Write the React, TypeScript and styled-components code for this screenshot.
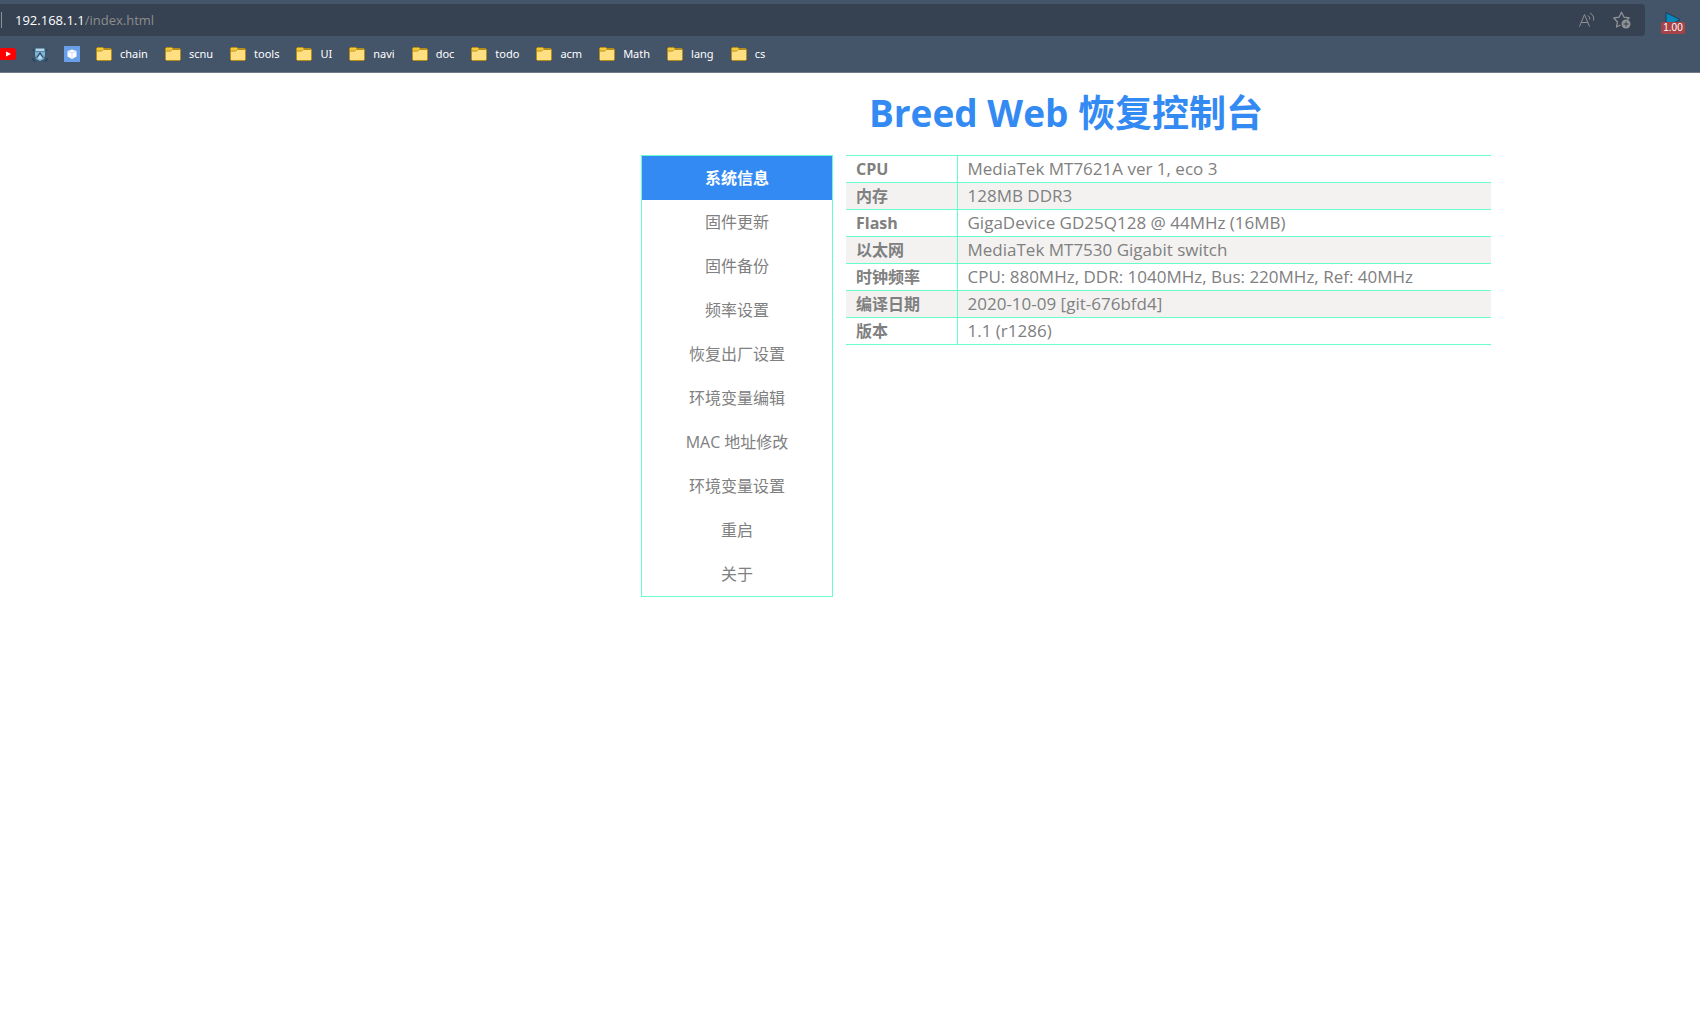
import React from "react";
import styled, { createGlobalStyle, css } from "styled-components";

const GlobalStyle = createGlobalStyle`
  *, *::before, *::after { box-sizing: border-box; }
  body {
    margin: 0;
    background: #fff;
    color: #808080;
    font-family: "Open Sans", "Noto Sans CJK SC", sans-serif;
    font-size: 16px;
  }
`;

const Browser = styled.header`
  background: #445469;
  border-bottom: 1px solid #6f7b8b;
  padding-top: 4px;
`;

const TopRow = styled.div`
  display: flex;
  gap: 16px;
  padding-right: 15px;
`;

const AddressBar = styled.form`
  flex: 1;
  display: flex;
  align-items: center;
  height: 32px;
  padding: 0 14px 0 1px;
  background: #364252;
  border-radius: 0 4px 4px 0;
  font-size: 13px;
`;

const Divider = styled.span`
  width: 1px;
  height: 16px;
  margin-right: 13px;
  background: #8a919b;
`;

const Host = styled.label`
  color: #fff;
`;

const PathInput = styled.input`
  flex: 1;
  min-width: 0;
  padding: 0;
  border: 0;
  outline: 0;
  background: none;
  color: #8d8d8d;
  font: inherit;
`;

const IconButton = styled.button`
  display: grid;
  place-items: center;
  height: 32px;
  padding: 0;
  border: 0;
  background: none;
  color: #8f9193;
  cursor: pointer;
`;

const BarActions = styled.div`
  display: flex;
  gap: 18px;
`;

const ExtensionButton = styled(IconButton)`
  position: relative;
  width: 24px;
`;

const Badge = styled.span`
  position: absolute;
  left: 0;
  bottom: 2px;
  width: 24px;
  height: 12px;
  border-radius: 2px;
  background: #a54349;
  color: #fff;
  font: 10px/12px "Liberation Sans", Arial, sans-serif;
  text-align: center;
`;

const Bookmarks = styled.nav`
  display: flex;
  align-items: center;
  gap: 16px;
  height: 36px;
  font-family: "Noto Sans", sans-serif;
`;

const Folders = styled.div`
  display: flex;
  gap: 17px;
`;

const Bookmark = styled.a`
  display: flex;
  align-items: center;
  gap: 8px;
  color: #fff;
  font-size: 11px;
  line-height: 16px;
  text-decoration: none;
`;

const Page = styled.div`
  padding-left: 432px;
`;

const Container = styled.div`
  max-width: 850px;
  margin: 0 auto;
`;

const Title = styled.h1`
  margin: 0;
  padding: 16px 0 18px;
  color: #338af3;
  font-size: 37px;
  line-height: 48px;
  text-align: center;
`;

const Columns = styled.div`
  display: flex;
  align-items: flex-start;
  gap: 13px;
`;

const Menu = styled.nav`
  width: 192px;
  flex: none;
  border: 1px solid #66ffcc;
`;

const MenuLink = styled.a<{ $active?: boolean }>`
  display: block;
  color: #808080;
  line-height: 44px;
  text-align: center;
  text-decoration: none;
  ${(p) =>
    p.$active &&
    css`
      background: #338af3;
      color: #fff;
      font-weight: bold;
    `}
`;

const InfoTable = styled.table`
  flex: 1;
  border-collapse: collapse;
  line-height: 26px;
  text-align: left;
`;

const Row = styled.tr`
  border-top: 1px solid #66ffcc;
  border-bottom: 1px solid #66ffcc;
  &:nth-child(even) { background: #f3f2f1; }
`;

const Name = styled.th`
  width: 111px;
  padding: 0 10px;
  border-right: 1px solid #66ffcc;
`;

const Value = styled.td`
  padding: 0 10px;
  font-size: 17px;
`;

const FolderIcon = () => (
  <svg width="16" height="16" viewBox="0 0 16 16" aria-hidden="true">
    <path d="M.5 2.5 1.5 1.5H6.500L8 2.500H14.500L15.500 3.500V13.500L14.500 14.500H1.500L.5 13.500Z" fill="#ffdf82" stroke="#b68d17" />
    <path d="M1 2H6.500V3.500L5.500 4.500H1Z" fill="#f6c92f" />
    <path d="M1 5H5.500L7.500 3.500H15" fill="none" stroke="#b68d17" />
  </svg>
);

const YoutubeIcon = () => (
  <svg width="16" height="16" viewBox="0 0 16 16" aria-hidden="true">
    <rect x="-1" y="2" width="17" height="12" rx="3" fill="#f00" />
    <path d="m6 5.500 5 2.500-5 2.500Z" fill="#fff" />
  </svg>
);

const MascotIcon = () => (
  <svg width="16" height="16" viewBox="0 0 16 16" aria-hidden="true">
    <path d="M2 1.500 4 .5 5 1.500H11L12 .5 14 1.500V9L13.500 11 16 14 14 15.500H2L0 14 2.500 11 2 9Z" fill="#35566f" />
    <path d="M3.500 2.500H12.500V5H3.500Z" fill="#b4d6e8" />
    <path d="M3 5.500H13V9L12 13 8 15 4 13 3 9Z" fill="#7fb3d3" />
    <path d="M4.500 12 8 7 11.500 12" fill="none" stroke="#2d506b" strokeWidth="1.300" />
    <path d="M5.500 12 8 9l2.500 3L8 13.500Z" fill="#b9dced" />
    <path d="M0 13h2M14 13h2M.5 4H2M14 4h1.500M1 15h2M13 15h2" stroke="#27394f" />
  </svg>
);

const CubeIcon = () => (
  <svg width="16" height="16" viewBox="0 0 16 16" aria-hidden="true">
    <path d="M0 0h16v16H0Z" fill="#699fe9" />
    <path d="m8 3.500 4.500 1.500v5.500L8 13l-4.500-2.500V5Z" fill="#fff" />
    <path d="m4 5.500 4 1.500 4-1.500M8 7.500V12" fill="none" stroke="#b8d2f5" strokeWidth=".8" />
  </svg>
);

const ReadAloudIcon = () => (
  <svg width="16" height="16" viewBox="0 0 16 16" fill="none" stroke="currentColor" aria-hidden="true">
    <path d="M.5 14.500 5.500 2.500 10.500 14.500M2.200 10.500H8.800" />
    <path d="M9 3.500Q11 5 10.800 7.500M11 1Q15.500 3.500 14.500 8.500" />
  </svg>
);

const AddFavoriteIcon = () => (
  <svg width="18" height="18" viewBox="0 0 18 18" fill="none" stroke="currentColor" aria-hidden="true">
    <path d="M7.500 14 3.500 16 4.500 11 .8 7 6 6.200 8.500 1.200 11 6.200 16.200 7 14.500 8.500" strokeWidth="1.300" strokeLinejoin="round" />
    <circle cx="13" cy="13" r="4.500" fill="currentColor" stroke="none" />
    <path d="M13 10.500v5M10.500 13h5" stroke="#364252" />
  </svg>
);

const PlayIcon = () => (
  <svg width="16" height="16" viewBox="0 0 16 16" aria-hidden="true">
    <path d="M1 .5 15 7.500 1 15.500Z" fill="#0788bd" stroke="#183f5b" />
  </svg>
);

const sites = [
  { name: "YouTube", Icon: YoutubeIcon },
  { name: "Mascot", Icon: MascotIcon },
  { name: "Cube", Icon: CubeIcon },
];

const folders = ["chain", "scnu", "tools", "UI", "navi", "doc", "todo", "acm", "Math", "lang", "cs"];

const menu = [
  "系统信息",
  "固件更新",
  "固件备份",
  "频率设置",
  "恢复出厂设置",
  "环境变量编辑",
  "MAC 地址修改",
  "环境变量设置",
  "重启",
  "关于",
];

const info = [
  ["CPU", "MediaTek MT7621A ver 1, eco 3"],
  ["内存", "128MB DDR3"],
  ["Flash", "GigaDevice GD25Q128 @ 44MHz (16MB)"],
  ["以太网", "MediaTek MT7530 Gigabit switch"],
  ["时钟频率", "CPU: 880MHz, DDR: 1040MHz, Bus: 220MHz, Ref: 40MHz"],
  ["编译日期", "2020-10-09 [git-676bfd4]"],
  ["版本", "1.1 (r1286)"],
];

export default function App() {
  return (
    <>
      <GlobalStyle />
      <Browser>
        <TopRow>
          <AddressBar onSubmit={(e) => e.preventDefault()}>
            <Divider />
            <Host htmlFor="path">192.168.1.1</Host>
            <PathInput id="path" defaultValue="/index.html" spellCheck={false} />
            <BarActions>
              <IconButton type="button" aria-label="Read aloud">
                <ReadAloudIcon />
              </IconButton>
              <IconButton type="button" aria-label="Add to favorites">
                <AddFavoriteIcon />
              </IconButton>
            </BarActions>
          </AddressBar>
          <ExtensionButton type="button" aria-label="Playback speed">
            <PlayIcon />
            <Badge>1.00</Badge>
          </ExtensionButton>
        </TopRow>
        <Bookmarks>
          {sites.map(({ name, Icon }) => (
            <Bookmark key={name} href="#" aria-label={name}>
              <Icon />
            </Bookmark>
          ))}
          <Folders>
            {folders.map((name) => (
              <Bookmark key={name} href="#">
                <FolderIcon />
                {name}
              </Bookmark>
            ))}
          </Folders>
        </Bookmarks>
      </Browser>
      <Page>
        <Container>
          <Title>Breed Web 恢复控制台</Title>
          <Columns>
            <Menu>
              {menu.map((label, i) => (
                <MenuLink key={label} href="#" $active={i === 0}>
                  {label}
                </MenuLink>
              ))}
            </Menu>
            <InfoTable>
              <tbody>
                {info.map(([name, value]) => (
                  <Row key={name}>
                    <Name scope="row">{name}</Name>
                    <Value>{value}</Value>
                  </Row>
                ))}
              </tbody>
            </InfoTable>
          </Columns>
        </Container>
      </Page>
    </>
  );
}
